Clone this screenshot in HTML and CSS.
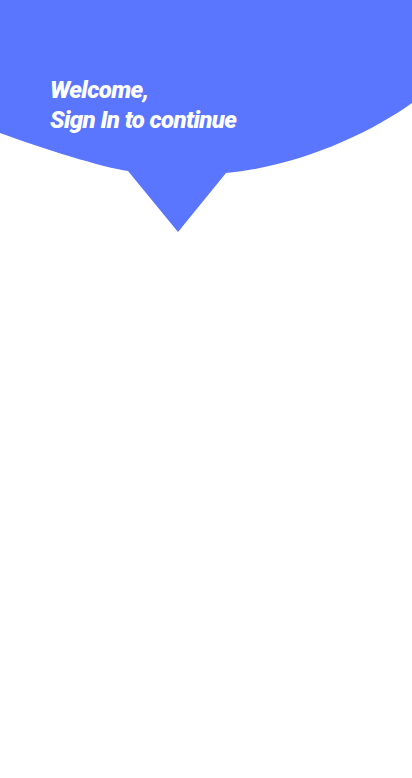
FILE: index.html
```html
<!DOCTYPE html>
<html lang="en">
<head>
<meta charset="utf-8">
<title>Sign In</title>
<link rel="stylesheet" href="styles.css">
</head>
<body>
<div class="page">
  <header class="hero">
    <svg class="hero-bg" width="412" height="233" viewBox="0 0 412 233" aria-hidden="true">
      <path d="M0,0 H412 V103 C370,133 300,166 226,173 L178,232 L128,171 C105,168 40,148 0,133 Z" fill="#5A75FE"/>
    </svg>
    <h1 class="hero-title">Welcome,<br>Sign In to continue</h1>
  </header>
</div>
</body>
</html>
```
FILE: styles.css
```css
html, body {
  margin: 0;
  padding: 0;
  background: #ffffff;
}

.page {
  width: 412px;
  min-height: 778px;
  background: #ffffff;
}

.hero {
  position: relative;
  height: 233px;
}

.hero-bg {
  position: absolute;
  left: 0;
  top: 0;
  display: block;
}

.hero-title {
  position: relative;
  margin: 0;
  padding: 75px 0 0 50px;
  font-family: Roboto, "Liberation Sans", sans-serif;
  font-weight: 900;
  font-style: italic;
  font-size: 24px;
  line-height: 30px;
  letter-spacing: -0.6px;
  color: #ffffff;
}
```
